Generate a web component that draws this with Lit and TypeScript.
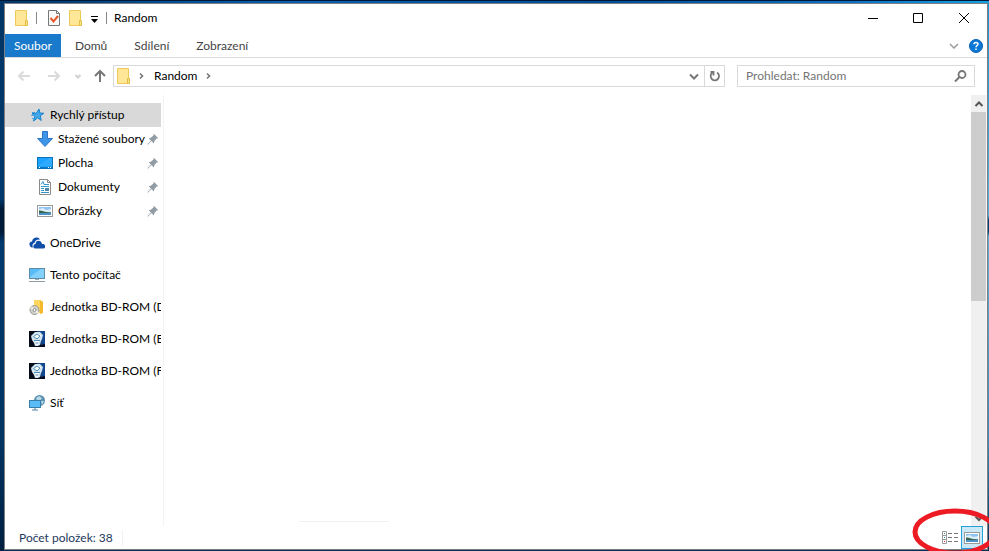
import { LitElement, html, svg, css } from "lit";
import { customElement, state } from "lit/decorators.js";
import { classMap } from "lit/directives/class-map.js";

const folder = svg`
  <path d="M1 1h11v10h2v5H1z" fill="#ffe68f"/>
  <path d="M1.500.5h11v15h-11z" fill="#ffe797" stroke="#edc95a"/>
  <path d="M11.500 10.500h2v5h-2z" fill="#fde48a" stroke="#e3bd45"/>`;

const bdrom = svg`
  <rect width="16" height="16" fill="#060b1c"/>
  <path d="M8 0h8v13l-4 1z" fill="#12478f"/>
  <path d="M2 5l4-4h5l3 3-1 4-1 2-1 4-2 1H6l-1-3-2-3z" fill="#cfe4f1"/>
  <path d="M4 5l4-3 4 2-4 4zM6 10h4v3l-2 1-2-1z" fill="#fff"/>
  <path d="M4.500 5.500L8 3l3 2-3 3zM5 9.500h6M6.500 12h3" stroke="#4f8fbd" fill="none"/>`;

const picture = svg`
  <rect x=".5" y="2.500" width="15" height="11" fill="#fff" stroke="#9a9a9a"/>
  <path d="M2 4h12v8H2z" fill="#8fc3f0"/>
  <path d="M2 6l4-1 3 2 5-1v3H2z" fill="#dceef8"/>
  <path d="M2 7.500c3 0 5 1.500 12 2v.5H2z" fill="#36664f"/>
  <path d="M2 10h12v2H2z" fill="#4a92c8"/>`;

const icons = {
  folder,
  bdrom,
  picture,
  star: svg`
    <path d="M10 2l.8 4 4.200.3-3.700 2.400.9 4.800-3.500-2.700L4.500 14l1.400-4.700L3 6.600l4.300-.4z" fill="#42a8ea" stroke="#1683cf"/>
    <path d="M3 5.500h3M2 8.500h3M3 11.500h2" stroke="#4aa3de"/>`,
  download: svg`<path d="M5.500.5h5v7h5L8 15.500.5 7.500h5z" fill="#3f96e8" stroke="#2f78c8"/>`,
  desktop: svg`
    <rect x=".5" y="2.500" width="15" height="11" fill="#1ea2ff" stroke="#0873b8"/>
    <path d="M1 11L12 3h3v8z" fill="#2eaaff"/>
    <path d="M1 12.500h14" stroke="#0a78c4"/><path d="M2 12.500h1M11 12.500h1M13 12.500h1" stroke="#fff"/>`,
  document: svg`
    <path d="M2.500.5h8l3 3v12h-11z" fill="#fff" stroke="#8a8a8a"/>
    <path d="M10.500.5v3h3" fill="none" stroke="#8a8a8a"/>
    <path d="M4 5.500l2-3 1 3M7 5.500h5M4 7.500h8M4 9.500h3M4 11.500h3M4 13.500h8" stroke="#3195ca" fill="none"/>
    <path d="M8 9h4v3H8z" fill="#4b87a9"/>`,
  onedrive: svg`
    <path d="M1 11C-.5 8.500 1 6.500 3 6.500 3.500 2.500 9 1 11 4.500 8 4 6 5.500 5.500 8 3.500 8 3 11 4 12.500 2.500 12.500 1.500 12 1 11z" fill="#0f4fa8"/>
    <path d="M6 13.500c-3-1-1.500-4.500.5-4.500 0-4.500 6-4.500 6.500 0 4-.5 4.500 4.500 1.500 4.500z" fill="#0f4fa8"/>`,
  computer: svg`
    <rect x=".5" y="1.500" width="15" height="10" fill="#58bdf7" stroke="#5f8ba7"/>
    <path d="M1 10L12 2h3v9H1z" fill="#83d0fb"/>
    <path d="M6 12.500h4" stroke="#9ab0bd"/><path d="M0 14.500h16" stroke="#8d9aa2"/>`,
  disc: svg`
    <path d="M5 1h6l3 2v11H5z" fill="#ffd65c"/><path d="M11 1l3 2v11l-3 1z" fill="#f3b82c"/>
    <circle cx="5.500" cy="11" r="4.500" fill="#d2d2cb" stroke="#9b9b95"/>
    <path d="M5.500 11L2 8.500M5.500 11l3.500 3" stroke="#f6f6f0" stroke-width="2"/>
    <circle cx="5.500" cy="11" r="1.500" fill="#fff" stroke="#888"/>`,
  network: svg`
    <circle cx="10.500" cy="5.500" r="5.500" fill="#5a8eae"/>
    <path d="M7 3l3-2 3 2-2 3-3 0zM12 6l3 0-2 4z" fill="#b5d8e8"/>
    <rect x=".5" y="5.500" width="11" height="7" fill="#58bdf7" stroke="#397fac"/>
    <path d="M6 13v2M3 15h6" stroke="#5686a3" fill="none"/>`,
  pin: svg`<path d="M9 2l5 5-2 .5-2.500 3-.5 2.500-2.800-2.700L2 14.500 1.500 14l4.200-4.200L3 7l2.500-.5 3-2.500z" fill="#8f9ba5"/>`,
  properties: svg`
    <path d="M2.500.5h8l3 3v12h-11z" fill="#f8f8f8" stroke="#777"/><path d="M10.500.5v3h3" fill="none" stroke="#777"/>
    <path d="M4.500 8l3 3.500L12 6" stroke="#e8562a" stroke-width="2" fill="none"/>`,
  customize: svg`<path d="M5 6.500h7" stroke="#000"/><path d="M5 9h7l-3.500 4z" fill="#000"/>`,
  minimize: svg`<path d="M4 8.500h10" stroke="#000"/>`,
  maximize: svg`<path d="M3.500 3.500h9v9h-9z" fill="none" stroke="#000"/>`,
  close: svg`<path d="M3 3l10 10M13 3L3 13" stroke="#000" fill="none"/>`,
  expand: svg`<path d="M4 6l4 4 4-4" stroke="#999" stroke-width="1.500" fill="none"/>`,
  help: svg`<circle cx="8" cy="8" r="6.500" fill="#0a78d7" stroke="#0b62b3"/>
    <path d="M6 6.300c0-2.600 4-2.400 4-.3 0 1.500-2 1.600-2 3.300M8 10.500V12" stroke="#fff" stroke-width="1.500" fill="none"/>`,
  back: svg`<path d="M14 8H3M7.500 3.500L3 8l4.500 4.500" stroke="#dadada" stroke-width="2" fill="none"/>`,
  forward: svg`<path d="M2 8h11M8.500 3.500L13 8l-4.500 4.500" stroke="#dadada" stroke-width="2" fill="none"/>`,
  recent: svg`<path d="M5.500 7L8 9.500 10.500 7" stroke="#d0d0d0" stroke-width="2" fill="none"/>`,
  up: svg`<path d="M8 14V3M3 8l5-5 5 5" stroke="#777" stroke-width="2" fill="none"/>`,
  crumb: svg`<path d="M6 5.500L8.500 8 6 10.500" stroke="#777" stroke-width="1.600" fill="none"/>`,
  history: svg`<path d="M4 6.500l4 4 4-4" stroke="#777" stroke-width="2" fill="none"/>`,
  refresh: svg`<path d="M10 4.500A4.200 4.200 0 1 1 5 5M3.500 4h3v3.500" stroke="#777" stroke-width="1.800" fill="none"/>`,
  search: svg`<circle cx="10" cy="6.500" r="3.500" stroke="#777" stroke-width="1.800" fill="none"/><path d="M7.500 9L3 13.500" stroke="#777" stroke-width="2"/>`,
  scrollUp: svg`<path d="M4.500 10L8 6.500l3.500 3.500" stroke="#555" stroke-width="2" fill="none"/>`,
  scrollDown: svg`<path d="M4.500 6.500L8 10l3.500-3.500" stroke="#555" stroke-width="2" fill="none"/>`,
  details: svg`
    <path d="M.5 1.500h4v12h-4zM.5 5.500h4M.5 9.500h4" fill="#fff" stroke="#999"/>
    <path d="M2 3.500h1" stroke="#398c55"/><path d="M2 7.500h1" stroke="#3879bf"/><path d="M2 11.500h1" stroke="#d33" />
    <path d="M6 3.500h4M12 3.500h4M6 7.500h4M12 7.500h4M6 11.500h4M12 11.500h4" stroke="#777"/>`,
};

type IconName = keyof typeof icons;

const icon = (name: IconName) =>
  html`<svg class="icon" viewBox="0 0 16 16" aria-hidden="true">${icons[name]}</svg>`;

interface Place {
  label: string;
  icon: IconName;
  pinned?: boolean;
}

const groups: Place[][] = [
  [
    { label: "Rychlý přístup", icon: "star" },
    { label: "Stažené soubory", icon: "download", pinned: true },
    { label: "Plocha", icon: "desktop", pinned: true },
    { label: "Dokumenty", icon: "document", pinned: true },
    { label: "Obrázky", icon: "picture", pinned: true },
  ],
  [{ label: "OneDrive", icon: "onedrive" }],
  [{ label: "Tento počítač", icon: "computer" }],
  [{ label: "Jednotka BD-ROM (D:)", icon: "disc" }],
  [{ label: "Jednotka BD-ROM (E:)", icon: "bdrom" }],
  [{ label: "Jednotka BD-ROM (F:)", icon: "bdrom" }],
  [{ label: "Síť", icon: "network" }],
];

@customElement("app-root")
export class AppRoot extends LitElement {
  @state() private selected = "Rychlý přístup";
  @state() private view = "thumbs";

  static styles = css`
    :host {
      display: block;
      position: relative;
      overflow: hidden;
      box-sizing: border-box;
      height: 100vh;
      padding: 3px 1px 1px 4px;
      font: 12px/16px Lato, "Noto Sans", sans-serif;
      color: #000;
      background:
        linear-gradient(#02183a, #02183a) 0 0 / 100% 1px no-repeat,
        linear-gradient(90deg, #003767, #0a5fae 30%, #004d94 60%, #0a6fc0 85%, #16a0e0) 0 0 / 100% 3px no-repeat,
        linear-gradient(#1295d3, #4fb3dc 39%, #003c72 40%, #003c72 42%, #5fb0d8 43%, #3a8cb8 80%, #003055) 100% 0 / 2px 100% no-repeat,
        linear-gradient(#003565, #003a6c 36%, #001a38 38%, #001a38 42%, #003a6c 44%, #003462 80%, #001f40) 0 0 / 4px 100% no-repeat,
        #003055;
    }
    * { box-sizing: border-box; }
    button, input { font: inherit; color: inherit; border: 0; margin: 0; padding: 0; background: none; }
    button { display: flex; align-items: center; justify-content: center; }
    a { color: inherit; text-decoration: none; }
    .icon { display: block; flex: none; width: 16px; height: 16px; }
    .window {
      display: flex;
      flex-direction: column;
      height: 100%;
      background: #fff;
      border: 1px solid #7d7f82;
    }
    .titlebar { display: flex; align-items: center; height: 30px; flex: none; padding-bottom: 2px; }
    .quick { display: flex; align-items: center; padding-left: 9px; }
    .rule { width: 1px; height: 12px; background: #888; margin: 0 9px 0 6px; }
    .rule.last { margin: 0 7px 0 4px; }
    .quick button + button { margin-left: 6px; }
    .quick button.menu { margin-left: 2px; }
    .title { flex: 1; margin: 0; font: inherit; }
    .caption { width: 46px; height: 28px; }
    .tabs { display: flex; flex: none; height: 24px; border-bottom: 1px solid #dadbdc; color: #444; }
    .tab { padding: 0 13px; }
    .tab + .tab { margin-left: 1px; }
    .tab.file { color: #fff; background: #1979ca; padding: 0 9px; }
    .tools { display: flex; margin-left: auto; gap: 6px; padding-right: 3px; }
    .location { display: flex; align-items: center; flex: none; height: 36px; padding: 0 12px 0 11px; }
    .history { display: flex; margin-right: 5px; }
    .history .forward { margin-left: 14px; }
    .history .recent { margin-left: 8px; }
    .history .up { margin-left: 6px; }
    .address, .search { display: flex; align-items: center; height: 22px; border: 1px solid #d9d9d9; }
    .address { flex: 1; padding-left: 2px; }
    .crumbs { display: flex; align-items: center; flex: 1; }
    .crumbs .icon + .icon { margin-left: 2px; }
    .crumbs a { padding: 0 4px; }
    .address button { width: 20px; height: 20px; }
    .address .refresh { border-left: 1px solid #d9d9d9; }
    .search { flex: 0 0 238px; margin-left: 12px; padding: 0 6px 0 8px; }
    .search input { flex: 1; min-width: 0; outline: 0; }
    .search input::placeholder { color: #757575; opacity: 1; }
    .body { display: flex; flex: 1; min-height: 0; }
    .nav { width: 159px; flex: none; margin-top: 1px; padding: 8px 2px 0 0; border-right: 1px solid #f3f3f3; overflow: hidden; }
    .group { list-style: none; margin: 0 0 8px; padding: 0; }
    .place { display: flex; align-items: center; height: 24px; padding-left: 24px; gap: 5px; white-space: nowrap; overflow: hidden; }
    .place.child { padding-left: 32px; }
    .place.on { background: #d9d9d9; }
    .place .name { flex: 1; }
    .place.child .icon + .name { width: 86px; flex: none; }
    .place .name + .icon { width: 14px; height: 14px; margin-left: -3px; }
    .files { flex: 1; display: flex; align-items: flex-end; }
    .edge { width: 90px; height: 1px; margin: 0 0 4px 135px; background: #f1f1f1; }
    .scroll { display: flex; flex-direction: column; width: 16px; flex: none; margin-top: 1px; background: #f0f0f0; border-right: 1px solid #f7f7f7; }
    .scroll button { height: 17px; flex: none; }
    .track { flex: 1; }
    .thumb { height: 47.500%; background: #cdcdcd; }
    .status { display: flex; align-items: center; flex: none; height: 23px; padding: 0 4px 0 14px; color: #1e395b; }
    .count { padding-right: 9px; border-right: 1px solid #f1f1f1; }
    .views { display: flex; margin-left: auto; }
    .views button { width: 22px; height: 23px; border: 1px solid transparent; }
    .views button.on { background: #cbe8f6; border-color: #26a0da; }
    .mark { position: absolute; right: -10px; bottom: -8px; width: 90px; height: 52px; pointer-events: none; }
  `;

  private place(p: Place) {
    return html`<li>
      <a href="#" class=${classMap({ place: true, child: !!p.pinned, on: p.label === this.selected })}
        @click=${() => (this.selected = p.label)}>
        ${icon(p.icon)}<span class="name">${p.label}</span>${p.pinned ? icon("pin") : null}
      </a>
    </li>`;
  }

  private viewButton(id: string, label: string, name: IconName) {
    return html`<button class=${classMap({ on: this.view === id })} aria-label=${label}
      @click=${() => (this.view = id)}>${icon(name)}</button>`;
  }

  render() {
    return html`
      <div class="window">
        <header class="titlebar">
          <div class="quick">
            ${icon("folder")}<span class="rule"></span>
            <button aria-label="Vlastnosti">${icon("properties")}</button>
            <button aria-label="Nová složka">${icon("folder")}</button>
            <button class="menu" aria-label="Přizpůsobit">${icon("customize")}</button>
            <span class="rule last"></span>
          </div>
          <h1 class="title">Random</h1>
          <button class="caption" aria-label="Minimalizovat">${icon("minimize")}</button>
          <button class="caption" aria-label="Maximalizovat">${icon("maximize")}</button>
          <button class="caption" aria-label="Zavřít">${icon("close")}</button>
        </header>
        <nav class="tabs">
          <button class="tab file">Soubor</button>
          <button class="tab">Domů</button>
          <button class="tab">Sdílení</button>
          <button class="tab">Zobrazení</button>
          <div class="tools">
            <button aria-label="Rozbalit pás karet">${icon("expand")}</button>
            <button aria-label="Nápověda">${icon("help")}</button>
          </div>
        </nav>
        <div class="location">
          <div class="history">
            <button aria-label="Zpět">${icon("back")}</button>
            <button class="forward" aria-label="Vpřed">${icon("forward")}</button>
            <button class="recent" aria-label="Poslední umístění">${icon("recent")}</button>
            <button class="up" aria-label="Nahoru">${icon("up")}</button>
          </div>
          <div class="address">
            <div class="crumbs">
              ${icon("folder")}${icon("crumb")}<a href="#">Random</a>${icon("crumb")}
            </div>
            <button aria-label="Předchozí umístění">${icon("history")}</button>
            <button class="refresh" aria-label="Aktualizovat">${icon("refresh")}</button>
          </div>
          <label class="search">
            <input type="text" aria-label="Prohledat" placeholder="Prohledat: Random" />
            ${icon("search")}
          </label>
        </div>
        <div class="body">
          <nav class="nav">
            ${groups.map((g) => html`<ul class="group">${g.map((p) => this.place(p))}</ul>`)}
          </nav>
          <main class="files"><div class="edge"></div></main>
          <div class="scroll">
            <button aria-label="Posunout nahoru">${icon("scrollUp")}</button>
            <div class="track"><div class="thumb"></div></div>
            <button aria-label="Posunout dolů">${icon("scrollDown")}</button>
          </div>
        </div>
        <footer class="status">
          <span class="count">Počet položek: 38</span>
          <div class="views">
            ${this.viewButton("details", "Podrobnosti", "details")}
            ${this.viewButton("thumbs", "Velké ikony", "picture")}
          </div>
        </footer>
      </div>
      <svg class="mark" viewBox="0 0 90 52" aria-hidden="true">
        <ellipse cx="46" cy="25" rx="40" ry="21" fill="none" stroke="#ed1c24" stroke-width="5" />
      </svg>
    `;
  }
}
